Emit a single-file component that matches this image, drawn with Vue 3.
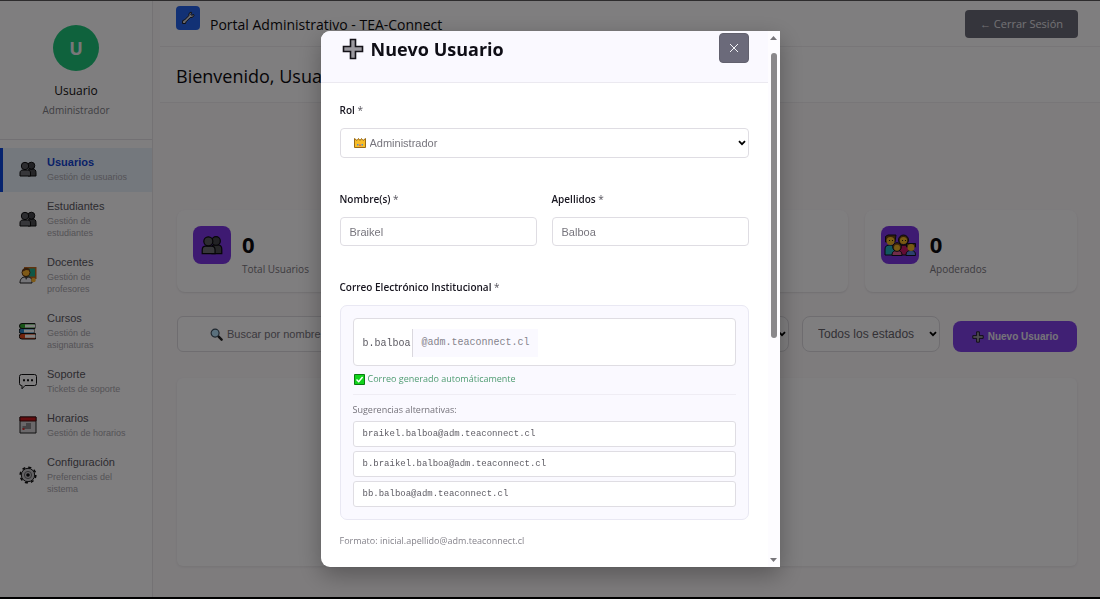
<script setup>
import { ref } from 'vue'

const menu = [
  { title: 'Usuarios', sub: 'Gestión de usuarios', icon: 'people', active: true },
  { title: 'Estudiantes', sub: 'Gestión de estudiantes', icon: 'people' },
  { title: 'Docentes', sub: 'Gestión de profesores', icon: 'teacher' },
  { title: 'Cursos', sub: 'Gestión de asignaturas', icon: 'books' },
  { title: 'Soporte', sub: 'Tickets de soporte', icon: 'chat' },
  { title: 'Horarios', sub: 'Gestión de horarios', icon: 'calendar' },
  { title: 'Configuración', sub: 'Preferencias del sistema', icon: 'gear' },
]

const stats = [
  { label: 'Total Usuarios', value: '0', icon: 'people' },
  {},
  {},
  { label: 'Apoderados', value: '0', icon: 'family' },
]

const suggestions = [
  'braikel.balboa@adm.teaconnect.cl',
  'b.braikel.balboa@adm.teaconnect.cl',
  'bb.balboa@adm.teaconnect.cl',
]

const firstName = ref('Braikel')
const lastName = ref('Balboa')
const mailUser = ref('b.balboa')
</script>

<template>
  <div class="page">
    <svg class="sprite" aria-hidden="true">
      <symbol id="people" viewBox="0 0 18 16">
        <path d="M9 9.500c0-1 1-1.500 2-1.500h3c2 0 3 1.500 3 3.500V15H9z" fill="#4c4c50" stroke="#0c0c0e" />
        <circle cx="12.300" cy="4.700" r="3.500" fill="#45454a" stroke="#0c0c0e" />
        <path d="M1 15v-3c0-2 1.200-3 3-3h4.500c2 0 3 1 3 3v3z" fill="#6e6e74" stroke="#0c0c0e" />
        <circle cx="6" cy="5" r="3.700" fill="#5a5a60" stroke="#0c0c0e" />
      </symbol>
      <symbol id="teacher" viewBox="0 0 18 18">
        <path d="M5 1h12.500v12H5z" fill="#c0661f" />
        <path d="M7 2.500h9v8H7z" fill="#1fae8f" />
        <circle cx="7" cy="6.500" r="4" fill="#ffb52e" stroke="#5a3010" />
        <path d="M3 6c0-5 7-6 8-1.500L7 4z" fill="#6d3d16" />
        <path d="M1 17c0-4 2-6 5-6h3c3 0 4 2 4 6z" fill="#e8e8ee" stroke="#222" />
        <path d="m6 11 1 3 2-3z" fill="#444" />
        <circle cx="14.500" cy="14" r="2.300" fill="#ffb52e" />
      </symbol>
      <symbol id="books" viewBox="0 0 18 18">
        <path d="M3 1.500h13v5H3a2.500 2.500 0 0 1 0-5z" fill="#2ea82e" stroke="#141414" />
        <path d="M6 2.500h10v3H6z" fill="#fff" />
        <path d="M2.500 6.500H15v5H2.500a2.500 2.500 0 0 1 0-5z" fill="#2b86c9" stroke="#141414" />
        <path d="M5 7.500h10v3H5z" fill="#fff" />
        <path d="M3 11.500h13.500v5.500H3a2.700 2.700 0 0 1 0-5.500z" fill="#e04718" stroke="#141414" />
        <path d="M6 12.600h10.500v3.200H6z" fill="#fff" />
      </symbol>
      <symbol id="chat" viewBox="0 0 18 18">
        <path d="M2.500 2.500h13a2 2 0 0 1 2 2v7a2 2 0 0 1-2 2H6L3 16.800v-3.300h-.5a2 2 0 0 1-2-2v-7a2 2 0 0 1 2-2z" fill="none" stroke="#101012" />
        <path d="M4 7.200h2v2H4zm4 0h2v2H8zm4 0h2v2h-2z" fill="#101012" />
      </symbol>
      <symbol id="calendar" viewBox="0 0 18 18">
        <path d="M1 1h16v16H1z" fill="#d4d1d5" stroke="#222" />
        <path d="M1 1h16v4H1z" fill="#c9181c" stroke="#451012" />
        <path d="M7 7h5v6H3.500v-3H7z" fill="#8a888c" />
        <path d="M3.500 12h2v2h-2z" fill="#e03030" />
      </symbol>
      <symbol id="gear" viewBox="0 0 18 18">
        <circle cx="9" cy="9" r="7.800" fill="none" stroke="#111" stroke-width="1.600" stroke-dasharray="3.100 3.030" />
        <circle cx="9" cy="9" r="6.700" fill="#c4c2c6" stroke="#161618" />
        <circle cx="9" cy="9" r="3.600" fill="none" stroke="#69696c" />
        <circle cx="9" cy="9" r="1.800" fill="#0c0c0e" />
      </symbol>
      <symbol id="family" viewBox="0 0 32 22">
        <path d="M1 21v-6c0-3 2-4 5-4s5 1 5 4v6z" fill="#25aebf" stroke="#10121c" />
        <path d="M15 21v-6c0-3 2-4 5-4s5 1 5 4v6z" fill="#c81868" stroke="#10121c" />
        <path d="M1.500 8V2.500L4 1h8l-1 7z" fill="#6a4014" stroke="#10121c" />
        <circle cx="6.500" cy="7" r="4" fill="#f0b428" />
        <circle cx="19.500" cy="6" r="5" fill="#6a4014" stroke="#10121c" />
        <circle cx="19.500" cy="6.500" r="3.600" fill="#f0b428" />
        <path d="M5 6h1v1H5zm3 0h1v1H8zm10 0h1v1h-1zm3 0h1v1h-1z" fill="#221" />
        <path d="M8 21.500c0-4 2-5 5-5s5 1 5 5z" fill="#e25a94" stroke="#10121c" />
        <circle cx="13" cy="13" r="4.300" fill="#8a5118" stroke="#10121c" />
        <circle cx="13" cy="13.700" r="3" fill="#f0b428" />
        <path d="M22 21.500c0-4 2-5 5-5s4.500 1 4.500 5z" fill="#5a84dc" stroke="#10121c" />
        <path d="M22.500 13V9.500h9V13z" fill="#6a4014" stroke="#10121c" />
        <circle cx="27" cy="13.500" r="3.500" fill="#f0b428" />
      </symbol>
      <symbol id="wrench" viewBox="0 0 14 14">
        <path d="m1.500 12.500.2-3 1.800-.5 4.300-4.300.2-2.200L10 1l.7.500-.9 2 .8.800 2-.8.400.800-1.500 2-2.200.2L5 10.800l-.5 1.700z" fill="#d8d6da" stroke="#1b1b22" />
      </symbol>
      <symbol id="plus" viewBox="0 0 22 22">
        <path d="M8.500 1.500h5v7h7v5h-7v7h-5v-7h-7v-5h7z" fill="#9a989e" stroke="#141218" stroke-width="1.600" />
      </symbol>
      <symbol id="lens" viewBox="0 0 14 14">
        <path d="m8.500 8.500 4 4" stroke="#222" stroke-width="2.600" stroke-linecap="round" />
        <circle cx="5.500" cy="5.500" r="4.300" fill="#b5e0fa" stroke="#3c4c5c" stroke-width="1.200" />
      </symbol>
      <symbol id="crown" viewBox="0 0 12 10">
        <path d="M.5 9.500v-9L3 2.500l1.500-2L6 2.500l1.500-2L9 2.500l2.500-2v9z" fill="#f8bd28" stroke="#9a6a14" />
        <path d="M3 6h1.500v1.500H3zm4.500 0H9v1.500H7.500z" fill="#4b8fd0" />
        <path d="M5.300 6.500h1.400V8H5.300z" fill="#e04848" />
      </symbol>
      <symbol id="check" viewBox="0 0 11 11">
        <path d="M.5.5h10v10H.5z" fill="#12d41c" stroke="#0a7a12" />
        <path d="m2.500 5.500 2.200 2.200L8.600 3" fill="none" stroke="#fff" stroke-width="1.500" />
      </symbol>
      <symbol id="chevron" viewBox="0 0 8 6">
        <path d="m1 1.200 3 3 3-3" fill="none" stroke="#000" stroke-width="1.800" />
      </symbol>
    </svg>

    <aside class="sidebar">
      <div class="profile">
        <div class="avatar">U</div>
        <strong class="profile-name">Usuario</strong>
        <span class="profile-role">Administrador</span>
      </div>
      <nav class="menu">
        <a v-for="m in menu" :key="m.title" href="#" class="menu-item" :class="{ active: m.active }">
          <svg class="menu-icon" aria-hidden="true"><use :href="'#' + m.icon" /></svg>
          <span class="menu-text">
            <span class="menu-title">{{ m.title }}</span>
            <span class="menu-sub">{{ m.sub }}</span>
          </span>
        </a>
      </nav>
    </aside>

    <main class="main">
      <header class="topbar">
        <span class="logo"><svg aria-hidden="true"><use href="#wrench" /></svg></span>
        <span class="brand">Portal Administrativo - TEA-Connect</span>
        <button type="button" class="logout">← Cerrar Sesión</button>
      </header>
      <section class="welcome"><h1>Bienvenido, Usuario</h1></section>

      <div class="content">
        <section class="stats">
          <article v-for="(s, i) in stats" :key="i" class="stat">
            <template v-if="s.label">
              <span class="stat-icon" :class="s.icon"><svg aria-hidden="true"><use :href="'#' + s.icon" /></svg></span>
              <div>
                <div class="stat-value">{{ s.value }}</div>
                <div class="stat-label">{{ s.label }}</div>
              </div>
            </template>
          </article>
        </section>

        <section class="toolbar">
          <div class="search">
            <svg aria-hidden="true"><use href="#lens" /></svg>
            <input type="search" placeholder="Buscar por nombre" aria-label="Buscar por nombre" />
          </div>
          <div class="select filter">
            <select aria-label="Rol"><option></option></select>
            <svg class="chevron" aria-hidden="true"><use href="#chevron" /></svg>
          </div>
          <div class="select filter">
            <select aria-label="Estado"><option>Todos los estados</option></select>
            <svg class="chevron" aria-hidden="true"><use href="#chevron" /></svg>
          </div>
          <button type="button" class="new-user">
            <svg aria-hidden="true"><use href="#plus" /></svg>Nuevo Usuario
          </button>
        </section>

        <section class="panel"></section>
      </div>
    </main>

    <div class="overlay">
      <div class="modal" role="dialog" aria-modal="true" aria-labelledby="modal-title">
        <div class="modal-view">
          <header class="modal-head">
            <svg aria-hidden="true"><use href="#plus" /></svg>
            <h2 id="modal-title">Nuevo Usuario</h2>
            <button type="button" class="close" aria-label="Cerrar">
              <svg viewBox="0 0 10 10" aria-hidden="true"><path d="m1 1 8 8M9 1 1 9" /></svg>
            </button>
          </header>

          <form class="form" @submit.prevent>
            <div class="field">
              <label for="rol">Rol <span>*</span></label>
              <div class="select role">
                <svg class="crown" aria-hidden="true"><use href="#crown" /></svg>
                <select id="rol"><option>Administrador</option></select>
                <svg class="chevron" aria-hidden="true"><use href="#chevron" /></svg>
              </div>
            </div>

            <div class="pair">
              <div class="field">
                <label for="nombre">Nombre(s) <span>*</span></label>
                <input id="nombre" v-model="firstName" type="text" class="text" />
              </div>
              <div class="field">
                <label for="apellidos">Apellidos <span>*</span></label>
                <input id="apellidos" v-model="lastName" type="text" class="text" />
              </div>
            </div>

            <div class="field">
              <label for="correo">Correo Electrónico Institucional <span>*</span></label>
              <div class="mail-box">
                <div class="mail">
                  <input id="correo" v-model="mailUser" type="text" />
                  <span class="domain">@adm.teaconnect.cl</span>
                </div>
                <p class="generated">
                  <svg aria-hidden="true"><use href="#check" /></svg>Correo generado automáticamente
                </p>
                <div class="alternatives">
                  <p class="alt-title">Sugerencias alternativas:</p>
                  <button v-for="s in suggestions" :key="s" type="button" class="alt">{{ s }}</button>
                </div>
              </div>
              <p class="hint">Formato: inicial.apellido@adm.teaconnect.cl</p>
            </div>
          </form>
        </div>
        <div class="scrollbar" aria-hidden="true">
          <svg viewBox="0 0 7 4"><path d="M0 4 3.500 0 7 4z" /></svg>
          <div class="track"><div class="thumb"></div></div>
          <svg viewBox="0 0 7 4"><path d="M0 0h7L3.500 4z" /></svg>
        </div>
      </div>
    </div>
  </div>
</template>

<style>
body {
  margin: 0;
  background: #fcf8fb;
}
</style>

<style scoped>
* {
  box-sizing: border-box;
}
.page {
  position: relative;
  display: flex;
  min-height: 100vh;
  border-top: 1px solid #5b595b;
  border-bottom: 2px solid #000;
  background: #fcf8fb;
  font-family: "Open Sans", "Noto Sans", sans-serif;
}
h1, h2, p {
  margin: 0;
}
button, input, select {
  font-family: "Liberation Sans", Arial, sans-serif;
}
.sprite {
  position: absolute;
  width: 0;
  height: 0;
}
.select {
  position: relative;
}
.select select {
  width: 100%;
  appearance: none;
}
.chevron {
  position: absolute;
  top: 50%;
  right: 3px;
  width: 8px;
  height: 6px;
  margin-top: -3px;
  pointer-events: none;
}

/* Sidebar */
.sidebar {
  width: 153px;
  flex: none;
  border-right: 1px solid #e8e4e9;
  background: #fffcff;
}
.profile {
  display: flex;
  flex-direction: column;
  align-items: center;
  height: 139px;
  padding-top: 24px;
  border-bottom: 1px solid #e4e1e6;
}
.avatar {
  display: flex;
  align-items: center;
  justify-content: center;
  width: 46px;
  height: 46px;
  border-radius: 50%;
  background: #1fc47a;
  color: #f0eef2;
  font-size: 18px;
  font-weight: 700;
}
.profile-name {
  margin-top: 12px;
  font-size: 12px;
  line-height: 16px;
  font-weight: 500;
  color: #111;
}
.profile-role {
  margin-top: 4px;
  font-size: 10px;
  line-height: 14px;
  color: #807e86;
}
.menu {
  padding-top: 8px;
  font-family: "Liberation Sans", Arial, sans-serif;
}
.menu-item {
  display: flex;
  align-items: center;
  gap: 10px;
  padding: 7px 18px 9px 16px;
  border-left: 3px solid transparent;
  color: #5a585f;
  text-decoration: none;
}
.menu-item.active {
  border-left-color: #0d47dc;
  background: #e9f0fb;
}
.menu-icon {
  flex: none;
  width: 18px;
  height: 18px;
}
.menu-title, .menu-sub {
  display: block;
}
.menu-title {
  margin-bottom: 2px;
  font-size: 11px;
  line-height: 14px;
}
.active .menu-title {
  font-weight: 700;
  color: #1243d0;
}
.menu-sub {
  font-size: 9px;
  line-height: 12px;
  color: #aaa7ae;
}

/* Main area */
.main {
  display: flex;
  flex: 1;
  flex-direction: column;
  min-width: 0;
  padding-left: 7px;
}
.topbar {
  display: flex;
  align-items: center;
  height: 46px;
  padding: 0 22px 0 16px;
  border-bottom: 1px solid #f0edf1;
  background: #fffcff;
}
.logo {
  display: grid;
  place-items: center;
  width: 24px;
  height: 24px;
  margin-bottom: 12px;
  border-radius: 4px;
  background: #2563eb;
}
.logo svg {
  width: 14px;
  height: 14px;
}
.brand {
  margin-left: 10px;
  padding-top: 2px;
  font-size: 14px;
  line-height: 18px;
  color: #0c0b0e;
}
.logout {
  height: 28px;
  margin-left: auto;
  padding: 0 15px;
  border: 0;
  border-radius: 4px;
  background: #6b6a78;
  color: #e4e2e8;
  font-family: "Open Sans", "Noto Sans", sans-serif;
  font-size: 11px;
}
.welcome {
  display: flex;
  align-items: center;
  height: 56px;
  padding: 2px 16px 0;
  border-bottom: 1px solid #f0edf1;
  background: #fffcff;
}
.welcome h1 {
  font-size: 18px;
  line-height: 24px;
  font-weight: 500;
  color: #0c0b0e;
}
.content {
  display: flex;
  flex: 1;
  flex-direction: column;
  padding: 107px 23px 31px 17px;
}
.stats {
  display: grid;
  grid-template-columns: repeat(4, 1fr);
  gap: 17px;
}
.stat {
  display: flex;
  gap: 11px;
  min-height: 81px;
  padding: 16px;
  border-radius: 8px;
  background: #fffcff;
  box-shadow: 0 1px 2px rgba(0, 0, 0, 0.1);
}
.stat-icon {
  display: grid;
  place-items: center;
  width: 38px;
  height: 38px;
  border-radius: 8px;
  background: #7c34e4;
}
.stat-icon svg {
  width: 22px;
  height: 20px;
}
.stat-icon.family svg {
  width: 32px;
  height: 22px;
}
.stat-value {
  font-size: 22px;
  line-height: 36px;
  font-weight: 700;
  color: #0c0b0e;
}
.stat-label {
  font-size: 10px;
  line-height: 14px;
  color: #7a7780;
}
.toolbar {
  display: flex;
  align-items: flex-end;
  gap: 13px;
  margin-top: 24px;
}
.search {
  display: flex;
  flex: 1;
  align-items: center;
  gap: 4px;
  height: 36px;
  padding: 0 32px;
  border: 1px solid #dedbe0;
  border-radius: 6px;
  background: #fffcff;
}
.search svg {
  flex: none;
  width: 13px;
  height: 13px;
}
.search input {
  flex: 1;
  min-width: 0;
  padding: 0;
  border: 0;
  outline: 0;
  background: transparent;
  font-size: 11px;
}
.search input::placeholder {
  color: #77747c;
}
.filter {
  width: 138px;
}
.filter select {
  display: block;
  height: 36px;
  padding: 0 0 0 15px;
  border: 1px solid #dedbe0;
  border-radius: 8px;
  background: #fffcff;
  color: #66636b;
  font-size: 12px;
}
.new-user {
  display: flex;
  align-items: center;
  justify-content: center;
  gap: 4px;
  width: 124px;
  height: 31px;
  padding: 0;
  border: 0;
  border-radius: 8px;
  background: #8040e8;
  color: #ece8f2;
  font-size: 10px;
  font-weight: 700;
}
.new-user svg {
  width: 12px;
  height: 12px;
}
.panel {
  flex: 1;
  margin-top: 26px;
  border-radius: 6px;
  background: #fffcff;
  box-shadow: 0 1px 3px rgba(0, 0, 0, 0.08);
}

/* Modal */
.overlay {
  position: fixed;
  inset: 0;
  display: flex;
  align-items: stretch;
  justify-content: center;
  padding: 31px 20px 32px;
  background: rgba(0, 0, 0, 0.5);
}
.modal {
  display: flex;
  width: 100%;
  max-width: 459px;
  overflow: hidden;
  border-radius: 9px 0 0 9px;
  background: #fff;
  box-shadow: 0 8px 24px rgba(0, 0, 0, 0.3);
}
.modal-view {
  flex: 1;
  min-width: 0;
  overflow: hidden;
}
.modal-head {
  display: flex;
  align-items: flex-end;
  gap: 7px;
  padding: 2px 19px 19px 21px;
  border-bottom: 1px solid #ebe9f0;
  background: #faf9ff;
}
.modal-head > svg {
  width: 22px;
  height: 28px;
}
.modal-head h2 {
  flex: 1;
  font-size: 18px;
  line-height: 28px;
  font-weight: 700;
  color: #0f0e16;
}
.close {
  display: grid;
  place-items: center;
  width: 30px;
  height: 30px;
  padding: 0;
  border: 1px solid #62616e;
  border-radius: 4px;
  background: #6b6a7a;
}
.close svg {
  width: 10px;
  height: 10px;
  fill: none;
  stroke: #f4f4f8;
}
.form {
  display: flex;
  flex-direction: column;
  gap: 34px;
  padding: 20px 19px;
}
.field {
  min-width: 0;
}
.field label {
  display: block;
  margin-bottom: 11px;
  font-size: 10px;
  line-height: 14px;
  font-weight: 600;
  color: #17151f;
}
.field label span {
  font-weight: 400;
  color: #55535c;
}
.crown {
  position: absolute;
  left: 14px;
  top: 10px;
  width: 12px;
  height: 10px;
}
.role select {
  display: block;
  height: 30px;
  padding: 0 0 0 29px;
  border: 1px solid #dfdde3;
  border-radius: 4px;
  background: #fff;
  color: #77757d;
  font-size: 11px;
}
.pair {
  display: grid;
  grid-template-columns: 1fr 1fr;
  gap: 15px;
}
.text {
  width: 100%;
  height: 29px;
  padding: 0 9px;
  border: 1px solid #dfdde3;
  border-radius: 4px;
  background: #fff;
  color: #77757d;
  font-size: 11px;
}
.mail-box {
  padding: 12px;
  border: 1px solid #e9e8f3;
  border-radius: 7px;
  background: #faf9ff;
}
.mail {
  display: flex;
  align-items: center;
  height: 48px;
  padding: 2px 9px 0;
  border: 1px solid #dfdde3;
  border-radius: 4px;
  background: #fff;
}
.mail input {
  width: 50px;
  height: 28px;
  padding: 0;
  border: 0;
  border-right: 1px solid #dad8de;
  outline: 0;
  background: transparent;
  color: #5a5860;
  font-family: "Liberation Mono", monospace;
  font-size: 10px;
}
.domain {
  padding: 0 8px 0 9px;
  background: #faf9ff;
  color: #85838c;
  font-family: "Liberation Mono", monospace;
  font-size: 10px;
  line-height: 28px;
}
.generated {
  display: flex;
  align-items: center;
  gap: 3px;
  padding: 6px 1px 8px;
  color: #4f9c72;
  font-size: 9px;
  line-height: 14px;
}
.generated svg {
  width: 11px;
  height: 11px;
}
.alternatives {
  display: flex;
  flex-direction: column;
  gap: 4px;
  padding-top: 8px;
  border-top: 1px solid #efedf4;
}
.alt-title {
  color: #74727a;
  font-size: 9px;
  line-height: 14px;
}
.alt {
  height: 26px;
  padding: 0 9px;
  border: 1px solid #dfdde3;
  border-radius: 3px;
  background: #fff;
  color: #5f5d65;
  font-family: "Liberation Mono", monospace;
  font-size: 9px;
  text-align: left;
}
.hint {
  margin-top: 14px;
  color: #85838b;
  font-size: 9px;
  line-height: 14px;
}
.scrollbar {
  display: flex;
  flex-direction: column;
  align-items: center;
  width: 12px;
  padding: 5px 0;
  background: #fdfcff;
}
.scrollbar svg {
  width: 7px;
  height: 4px;
  fill: #77757a;
}
.track {
  flex: 1;
  padding: 13px 0;
}
.thumb {
  width: 6px;
  height: 58%;
  border-radius: 3px;
  background: #8a888b;
}
</style>
